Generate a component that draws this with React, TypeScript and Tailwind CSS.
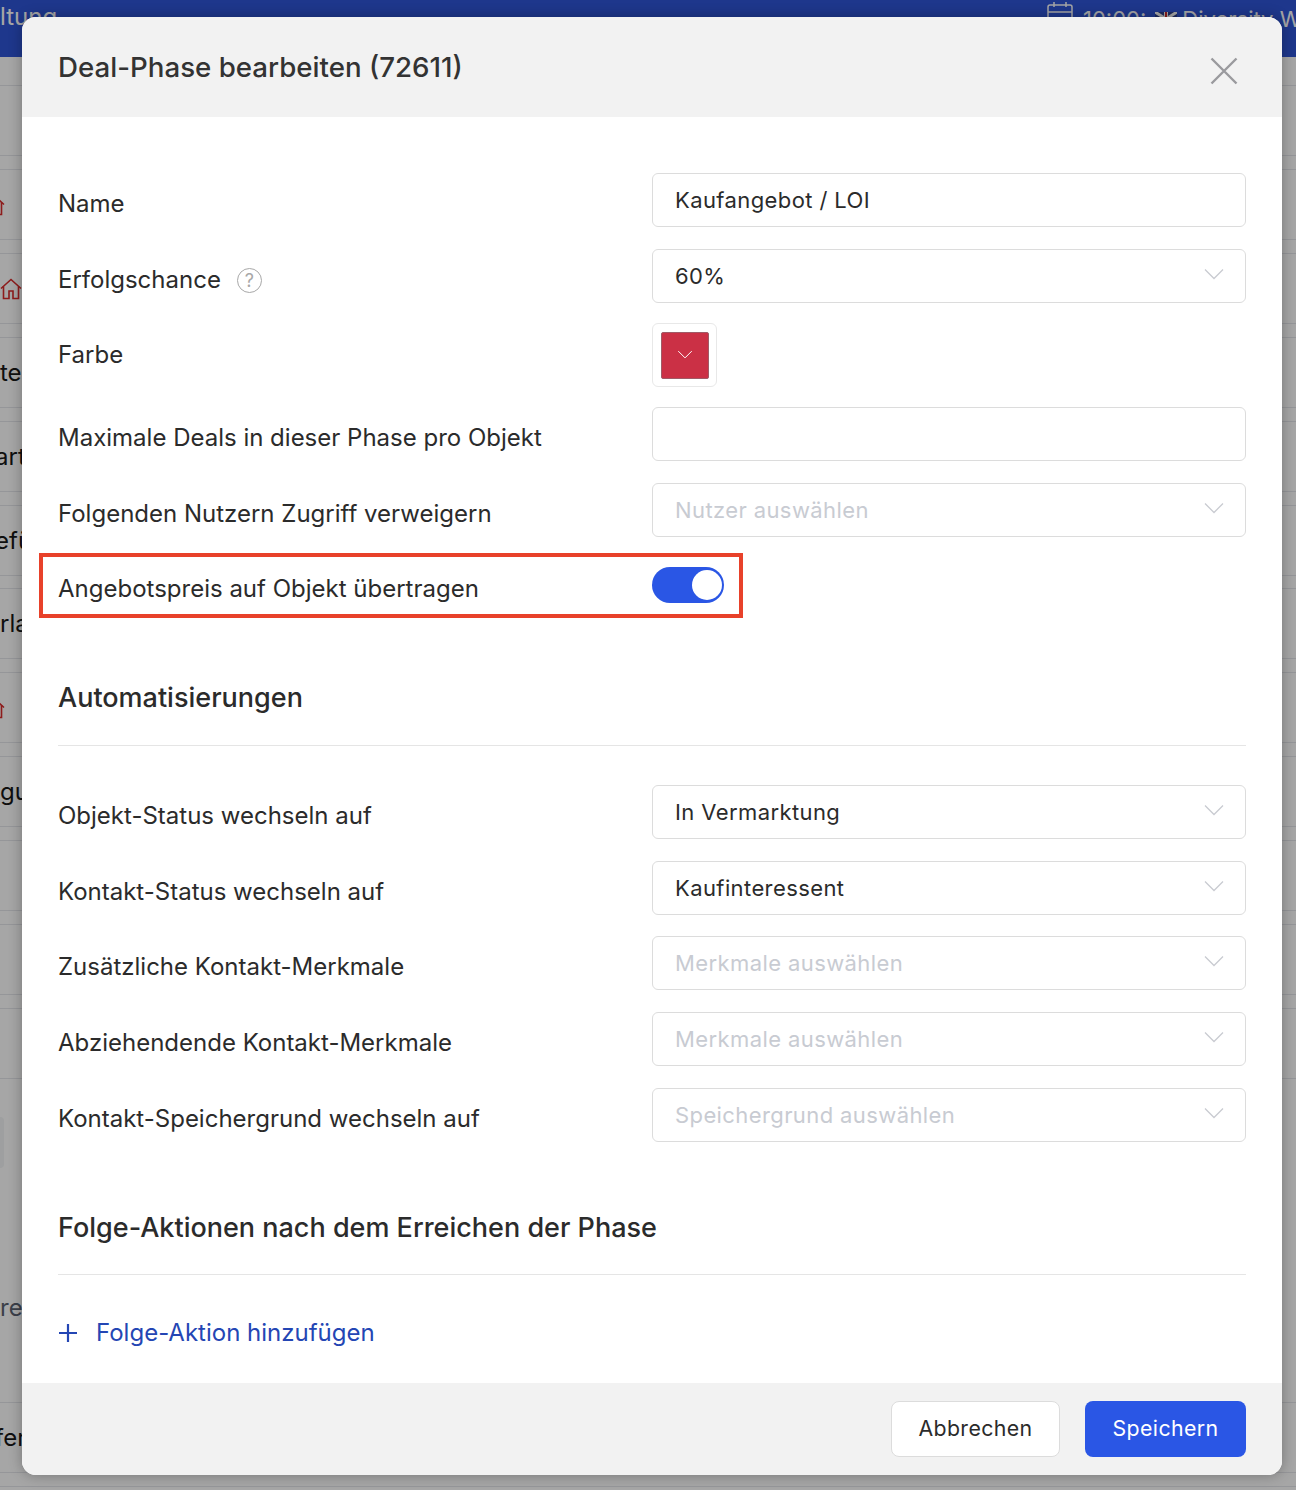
const font = { fontFamily: "Inter, 'Noto Sans', sans-serif" };

type BackRow = { text?: string; house?: "full" | "cut"; tight?: boolean; shift?: string };

const backRows: BackRow[] = [
  {},
  { house: "cut" },
  { house: "full" },
  { text: "ter" },
  { text: "art", shift: "-ml-[5px]" },
  { text: "efü", shift: "-ml-[5px]" },
  { text: "rla", tight: true },
  { house: "cut" },
  { text: "gu" },
  {},
  {},
  {},
];

function House({ className }: { className: string }) {
  return (
    <svg viewBox="0 0 22 22" fill="none" stroke="#d92b2b" strokeWidth="1.6" className={className}>
      <path d="M1 10.5 11 1.5l10 9" />
      <path d="M3.5 8.5V20.5H9V13h4v7.5h5.5V8.5" />
    </svg>
  );
}

function Chevron({ className }: { className: string }) {
  return (
    <svg viewBox="0 0 20 12" fill="none" stroke="currentColor" strokeWidth="1.3" className={className}>
      <path d="M1 1.5l9 9 9-9" />
    </svg>
  );
}

function Backdrop() {
  return (
    <div className="flex flex-col">
      <div className="flex h-[57px] justify-between overflow-hidden bg-[#2f55d7] text-white">
        <span className="pt-[2px] text-[24px] leading-[30px]">ltung</span>
        <div className="flex w-[250px] shrink-0 items-start text-[22px] leading-[30px]">
          <svg viewBox="0 0 26 26" fill="none" stroke="currentColor" strokeWidth="1.5" className="ml-[1px] mt-[2px] h-[26px] w-[26px] shrink-0">
            <rect x="1" y="3" width="24" height="22" rx="2" />
            <path d="M1 10h24M7 0v5M19 0v5" />
          </svg>
          <span className="ml-[10px] pt-[4px]">10:00:</span>
          <svg viewBox="0 0 22 14" className="ml-[9px] mt-[12px] h-[14px] w-[22px] shrink-0">
            <rect width="22" height="14" fill="#2a3f8f" />
            <path d="M0 0l22 14M22 0L0 14" stroke="#fff" strokeWidth="3" />
            <path d="M11 0v14M0 7h22" stroke="#fff" strokeWidth="4" />
            <path d="M11 0v14M0 7h22" stroke="#d12b2b" strokeWidth="2" />
          </svg>
          <span className="ml-[5px] whitespace-nowrap pt-[4px]">Diversity W</span>
        </div>
      </div>
      <div className="h-[28px]" />
      {backRows.map((row, i) => (
        <div
          key={i}
          className={`flex h-[71px] items-center border-y border-[#e5e7eb] text-[24px] text-[#171717] ${
            i === 0 ? "" : row.tight ? "mt-[12px]" : "mt-[13px]"
          }`}
        >
          {row.text && <span className={row.shift}>{row.text}</span>}
          {row.house === "full" && <House className="h-[22px] w-[22px]" />}
          {row.house === "cut" && <House className="-ml-[17px] h-[22px] w-[22px] shrink-0" />}
        </div>
      ))}
      <div className="mt-[38px] h-[51px] w-[4px] rounded-r-lg bg-[#f3f4f6]" />
      <div className="mt-[122px] text-[24px] leading-[36px] text-[#5b6270]">re</div>
      <div className="mt-[76px] flex h-[71px] items-center border-y border-[#e5e7eb] text-[24px] text-[#171717]">
        <span className="-ml-[5px]">fer</span>
      </div>
      <div className="mt-[13px] h-[71px] border-t border-[#e5e7eb]" />
    </div>
  );
}

function Label({ children }: { children: React.ReactNode }) {
  return <div className="flex h-[54px] w-[594px] shrink-0 items-center pt-[8px]">{children}</div>;
}

function Field({
  label,
  value,
  placeholder,
  select,
  className = "",
}: {
  label: React.ReactNode;
  value?: string;
  placeholder?: string;
  select?: boolean;
  className?: string;
}) {
  return (
    <div className={`flex ${className}`}>
      <Label>{label}</Label>
      <div className="flex h-[54px] flex-1 items-center justify-between rounded-[6px] border border-[#dcdcdc] bg-white pl-[22px] pr-[21px]">
        <span className={`pt-[1px] text-[22px] tracking-[0.4px] ${value ? "text-[#2b2b2b]" : "text-[#c8cbd2]"}`}>
          {value ?? placeholder}
        </span>
        {select && <Chevron className="mb-[4px] h-[12px] w-[20px] text-[#c9cbd1]" />}
      </div>
    </div>
  );
}

export default function App() {
  return (
    <div style={font} className="relative h-[1490px] overflow-hidden bg-white">
      <Backdrop />
      <div className="absolute inset-0 bg-black/35" />

      <div className="absolute left-[22px] top-[17px] w-[1260px] overflow-hidden rounded-[14px] bg-white text-[24px] text-[#2b2b2b] shadow-[0_0_14px_rgba(0,0,0,0.3)]">
        <div className="flex h-[100px] items-start justify-between bg-[#f2f2f2] pl-[36px] pr-[44px]">
          <h1 className="pt-[30px] text-[27.7px] font-medium leading-[40px] text-[#333333]">
            Deal-Phase bearbeiten (72611)
          </h1>
          <svg viewBox="0 0 28 28" fill="none" stroke="#9a9a9e" strokeWidth="2.4" className="mt-[40px] h-[28px] w-[28px]">
            <path d="M1.5 1.5l25 25M26.5 1.5l-25 25" />
          </svg>
        </div>

        <div className="px-[36px] pb-[33px] pt-[56px]">
          <Field label="Name" value="Kaufangebot / LOI" />
          <Field
            className="mt-[22px]"
            select
            value="60%"
            label={
              <span className="flex items-center gap-[16px]">
                Erfolgschance
                <span className="flex h-[25px] w-[25px] items-center justify-center rounded-full border-[1.5px] border-[#a8a8a8] text-[18px] text-[#a8a8a8]">
                  ?
                </span>
              </span>
            }
          />
          <div className="mt-[20px] flex">
            <div className="flex h-[64px] w-[594px] shrink-0 items-center">Farbe</div>
            <div className="flex h-[64px] w-[65px] items-center justify-center rounded-[6px] border border-[#e8e8e8] bg-white">
              <div className="flex h-[47px] w-[48px] items-center justify-center rounded-[2px] border border-[#a05a66] bg-[#cb3045]">
                <Chevron className="mb-[2px] h-[9px] w-[16px] text-white" />
              </div>
            </div>
          </div>
          <Field className="mt-[20px]" label="Maximale Deals in dieser Phase pro Objekt" />
          <Field className="mt-[22px]" select label="Folgenden Nutzern Zugriff verweigern" placeholder="Nutzer auswählen" />

          <div className="relative mt-[30px] flex h-[36px] items-center">
            <div className="w-[594px] shrink-0 pt-[8px]">Angebotspreis auf Objekt übertragen</div>
            <div className="flex h-[36px] w-[72px] items-center justify-end rounded-full bg-[#2a56e5] pr-[2px]">
              <div className="h-[30px] w-[30px] rounded-full bg-white" />
            </div>
            <div className="absolute -left-[19px] -top-[14px] h-[65px] w-[704px] border-4 border-[#e8412a]" />
          </div>

          <h2 className="mt-[76px] pt-[1px] text-[27px] font-medium leading-[36px]">Automatisierungen</h2>
          <div className="mt-[29px] border-t border-[#e5e5e5]" />

          <Field className="mt-[39px]" select label="Objekt-Status wechseln auf" value="In Vermarktung" />
          <Field className="mt-[22px]" select label="Kontakt-Status wechseln auf" value="Kaufinteressent" />
          <Field className="mt-[21px]" select label="Zusätzliche Kontakt-Merkmale" placeholder="Merkmale auswählen" />
          <Field className="mt-[22px]" select label="Abziehendende Kontakt-Merkmale" placeholder="Merkmale auswählen" />
          <Field className="mt-[22px]" select label="Kontakt-Speichergrund wechseln auf" placeholder="Speichergrund auswählen" />

          <h2 className="mt-[67px] pt-[1px] text-[27px] font-medium leading-[36px]">Folge-Aktionen nach dem Erreichen der Phase</h2>
          <div className="mt-[28px] border-t border-[#e5e5e5]" />

          <div className="mt-[39px] flex h-[36px] items-center gap-[18px] pt-[1px] text-[#2446b4]">
            <svg viewBox="0 0 20 20" fill="none" stroke="currentColor" strokeWidth="2.2" className="h-[20px] w-[20px]">
              <path d="M10 1v18M1 10h18" />
            </svg>
            Folge-Aktion hinzufügen
          </div>
        </div>

        <div className="flex h-[92px] items-center justify-end gap-[25px] bg-[#f2f2f2] pr-[36px]">
          <button className="h-[56px] w-[169px] rounded-[8px] border border-[#dcdcdc] bg-white text-[21.3px] tracking-[0.4px] text-[#2b2b2b]">
            Abbrechen
          </button>
          <button className="h-[56px] w-[161px] rounded-[8px] bg-[#2a56e5] text-[21.3px] tracking-[0.4px] text-white">
            Speichern
          </button>
        </div>
      </div>
    </div>
  );
}
